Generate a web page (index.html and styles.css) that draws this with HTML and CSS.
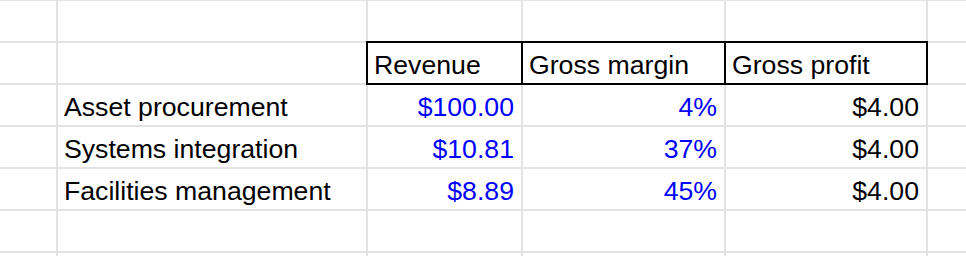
FILE: index.html
```html
<!DOCTYPE html>
<html>
<head>
    <title>Gross profit sheet</title>
    <link rel="stylesheet" href="styles.css">
</head>
<body>
    <div class="sheet">
        <div class="cell"></div><div class="cell"></div><div class="cell"></div><div class="cell"></div><div class="cell"></div><div class="cell"></div>

        <div class="cell"></div>
        <div class="cell"></div>
        <div class="cell head">Revenue</div>
        <div class="cell head">Gross margin</div>
        <div class="cell head">Gross profit</div>
        <div class="cell"></div>

        <div class="cell"></div>
        <div class="cell">Asset procurement</div>
        <div class="cell num blue">$100.00</div>
        <div class="cell num blue">4%</div>
        <div class="cell num">$4.00</div>
        <div class="cell"></div>

        <div class="cell"></div>
        <div class="cell">Systems integration</div>
        <div class="cell num blue">$10.81</div>
        <div class="cell num blue">37%</div>
        <div class="cell num">$4.00</div>
        <div class="cell"></div>

        <div class="cell"></div>
        <div class="cell">Facilities management</div>
        <div class="cell num blue">$8.89</div>
        <div class="cell num blue">45%</div>
        <div class="cell num">$4.00</div>
        <div class="cell"></div>

        <div class="cell"></div><div class="cell"></div><div class="cell"></div><div class="cell"></div><div class="cell"></div><div class="cell"></div>
        <div class="cell"></div><div class="cell"></div><div class="cell"></div><div class="cell"></div><div class="cell"></div><div class="cell"></div>
    </div>
</body>
</html>
```

FILE: styles.css
```css
body {
    margin: 0;
    background-color: #fff;
    overflow: hidden;
    font-family: "Liberation Sans", Arial, sans-serif;
}
.sheet {
    display: grid;
    grid-template-columns: 56px 308px 153px 201px 200px 1fr;
    grid-auto-rows: 40px;
    gap: 2px;
    padding-top: 1px;
    width: 966px;
    height: 256px;
    box-sizing: border-box;
    overflow: hidden;
    background-color: #e2e2e2; /* gridlines show through the gaps */
}
.cell {
    display: flex;
    align-items: flex-end;
    padding: 0 7px 3px 6px;
    background-color: #fff;
    font-size: 26.67px;
    line-height: 30px;
    color: #000;
    white-space: nowrap;
}
.head {
    outline: 2px solid #000;
}
.num {
    justify-content: flex-end;
}
.blue {
    color: #0000ff;
}
```
